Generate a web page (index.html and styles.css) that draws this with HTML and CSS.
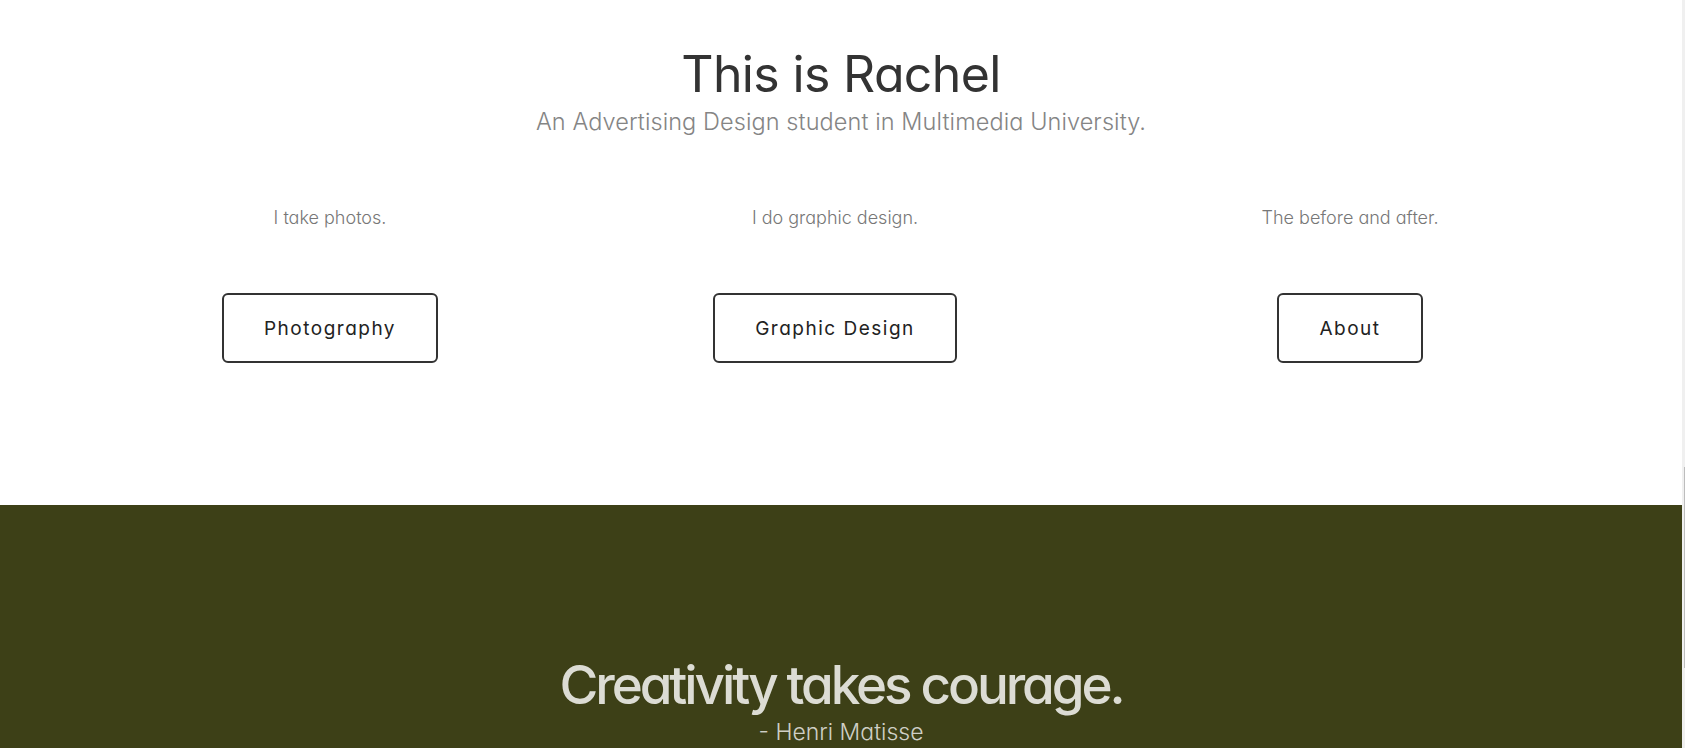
FILE: index.html
```html
<!DOCTYPE html>
<html lang="en">
<head>
<meta charset="utf-8">
<title>This is Rachel</title>
<link rel="stylesheet" href="styles.css">
</head>
<body>
<div class="page">
  <main class="main">
    <section class="hero">
      <header class="intro">
        <h1 class="title">This is Rachel</h1>
        <p class="subtitle">An Advertising Design student in Multimedia University.</p>
      </header>
      <div class="columns">
        <div class="col">
          <p class="col-text">I take photos.</p>
          <a class="btn" href="#">Photography</a>
        </div>
        <div class="col">
          <p class="col-text">I do graphic design.</p>
          <a class="btn" href="#">Graphic Design</a>
        </div>
        <div class="col">
          <p class="col-text">The before and after.</p>
          <a class="btn" href="#">About</a>
        </div>
      </div>
    </section>
    <section class="quote">
      <h2 class="quote-text">Creativity takes courage.</h2>
      <p class="quote-author">- Henri Matisse</p>
    </section>
  </main>
  <aside class="scrollbar"><div class="thumb"></div></aside>
</div>
</body>
</html>
```

FILE: styles.css
```css
* { box-sizing: border-box; }
html, body { margin: 0; padding: 0; height: 100%; overflow: hidden; }
body {
  font-family: Inter, "Noto Sans", sans-serif;
  font-feature-settings: "cv11" 1;
  background: #fff;
}
.page { display: flex; height: 748px; }
.main { flex: 1; display: flex; flex-direction: column; }
.scrollbar { width: 3px; background: #f0f0f0; display: flex; justify-content: flex-end; padding-top: 467px; }
.thumb { width: 1px; height: 201px; background: #bdbdbd; }

.hero { height: 505px; display: flex; flex-direction: column; }
.intro { text-align: center; padding-top: 44px; }
.title { margin: 0; font-weight: 400; font-size: 50px; line-height: 60px; color: #333; letter-spacing: -0.65px; }
.subtitle { margin: 2px 0 0; font-size: 23.5px; line-height: 32px; color: #858585; font-weight: 300; letter-spacing: 0.08px; }

.columns { display: grid; grid-template-columns: 510px 500px 530px; padding-left: 75px; margin-top: 68px; }
.col { display: flex; flex-direction: column; align-items: center; }
.col-text { margin: 0; font-size: 18px; line-height: 24px; color: #777; font-weight: 300; }
.btn {
  margin-top: 63px;
  display: flex; align-items: center; justify-content: center;
  height: 70px; padding: 0 40px;
  border: 2px solid #333; border-radius: 6px;
  font-size: 19px; letter-spacing: 1.5px; color: #222; text-decoration: none;
}

.quote { flex: 1; background: #3d4017; text-align: center; padding-top: 148px; }
.quote-text { margin: 0; font-weight: 500; font-size: 53px; line-height: 64px; color: #dcdcd4; letter-spacing: -3.1px; }
.quote-author { margin: 0; font-size: 23px; line-height: 30px; color: #cfcfc6; font-weight: 300; }
```
